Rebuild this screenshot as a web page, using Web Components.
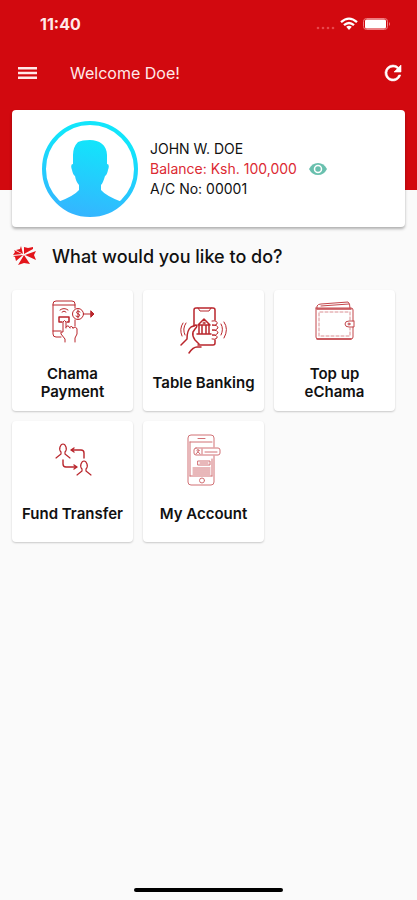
<!DOCTYPE html>
<html lang="en">
  <head>
    <meta charset="UTF-8" />
    <meta name="viewport" content="width=device-width, initial-scale=1.0" />
    <title>eChama</title>
    <style>
      body {
        margin: 0;
        background: #fafafa;
        color: #111;
        font-family: Inter, "Liberation Sans", sans-serif;
      }
    </style>
  </head>
  <body>
    <home-screen>
      <status-bar slot="top">11:40</status-bar>
      <app-bar slot="top">Welcome Doe!</app-bar>
      <profile-card>
        <span slot="name">JOHN W. DOE</span>
        <span slot="balance">Balance: Ksh. 100,000</span>
        <span slot="account">A/C No: 00001</span>
      </profile-card>
      <section-title>What would you like to do?</section-title>
      <action-grid>
        <action-tile icon="payment">Chama Payment</action-tile>
        <action-tile icon="banking">Table Banking</action-tile>
        <action-tile icon="wallet">Top up eChama</action-tile>
        <action-tile icon="transfer">Fund Transfer</action-tile>
        <action-tile icon="account">My Account</action-tile>
      </action-grid>
    </home-screen>

    <script>
      // Shared base: puts the class markup in an open shadow root
      class BaseElement extends HTMLElement {
        constructor() {
          super();
          this.attachShadow({ mode: "open" });
        }

        connectedCallback() {
          this.shadowRoot.innerHTML = `<style>${this.styles()}</style>${this.markup()}`;
        }
      }

      class HomeScreen extends BaseElement {
        styles() {
          return `
            :host { display: flex; flex-direction: column; min-height: 100vh; }
            header { background: #d2090f; color: #ffe9e9; padding-bottom: 92px; }
            main { flex: 1; margin-top: -80px; padding: 0 12px; }
            footer { display: flex; justify-content: center; padding: 8px; }
            .bar { width: 37%; height: 4px; border-radius: 2px; background: #000; }
          `;
        }

        markup() {
          return `
            <header><slot name="top"></slot></header>
            <main><slot></slot></main>
            <footer><div class="bar"></div></footer>
          `;
        }
      }

      class StatusBar extends BaseElement {
        styles() {
          return `
            :host {
              display: flex;
              align-items: center;
              justify-content: space-between;
              height: 48px;
              padding: 0 26px 0 40px;
              font-size: 16px;
              font-weight: 700;
            }
            svg { display: block; }
          `;
        }

        markup() {
          return `
            <slot></slot>
            <svg width="76" height="16" viewBox="0 0 76 16" fill="#fff">
              <g fill="#e8474c">
                <circle cx="3" cy="12" r="1.3" /><circle cx="8" cy="12" r="1.3" />
                <circle cx="13" cy="12" r="1.3" /><circle cx="18" cy="12" r="1.3" />
              </g>
              <g fill="none" stroke="#fff" stroke-width="2.3">
                <path d="M26 6.2Q34 -1 42 6.2" />
                <path d="M29 9.2Q34 4.8 39 9.2" />
              </g>
              <path d="M31.2 10.8Q34 8.6 36.8 10.8L34 14Z" />
              <rect x="48.500" y="2.500" width="24" height="11" rx="3" fill="none" stroke="#ef7d80" />
              <rect x="50" y="3.500" width="21" height="9" rx="1.500" />
              <path d="M74 6Q76 8 74 10Z" fill="#ef7d80" />
            </svg>
          `;
        }
      }

      class AppBar extends BaseElement {
        styles() {
          return `
            :host {
              display: flex;
              align-items: center;
              height: 50px;
              padding: 0 12px 0 16px;
              font-size: 16px;
            }
            h1 { flex: 1; margin: 0 0 0 30px; font-size: inherit; font-weight: 400; }
            button { border: 0; padding: 0; background: none; color: #fff; }
            svg { display: block; }
          `;
        }

        markup() {
          return `
            <button aria-label="Menu">
              <svg width="24" height="24" viewBox="0 0 24 24" fill="#ffe9e9">
                <path d="M2 18h19v-2.500H2V18zm0-4.700h19v-2.600H2v2.600zM2 6v2.500h19V6H2z" />
              </svg>
            </button>
            <h1><slot></slot></h1>
            <button aria-label="Refresh">
              <svg width="24" height="24" viewBox="0 0 24 24" fill="#fff" stroke="#fff" stroke-width=".6">
                <path d="M17.650 6.350A7.960 7.960 0 0 0 12 4a8 8 0 1 0 7.730 10h-2.080A6 6 0 1 1 12 6c1.660 0 3.140.690 4.220 1.780L13 11h7V4l-2.350 2.350z" />
              </svg>
            </button>
          `;
        }
      }

      class ProfileCard extends BaseElement {
        styles() {
          return `
            :host {
              display: flex;
              align-items: center;
              gap: 12px;
              min-height: 117px;
              padding-left: 30px;
              border-radius: 4px;
              background: #fff;
              box-shadow: 0 2px 3px rgba(0, 0, 0, 0.3);
              font-size: 14px;
              line-height: 20px;
            }
            svg { display: block; flex: none; }
            .balance { display: flex; align-items: center; gap: 12px; color: #dc2a33; }
            button { border: 0; padding: 0; background: none; }
          `;
        }

        markup() {
          return `
            <svg width="96" height="96" viewBox="0 0 96 96">
              <defs>
                <linearGradient id="fill" gradientUnits="userSpaceOnUse" x1="56" y1="0" x2="36" y2="96">
                  <stop offset="0.200" stop-color="#12e5fb" />
                  <stop offset="1" stop-color="#35b4ff" />
                </linearGradient>
              </defs>
              <circle cx="48" cy="48" r="46" fill="none" stroke="url(#fill)" stroke-width="4" />
              <path
                fill="url(#fill)"
                d="M48 19C57 19 65 24 65 34L65 43Q68 43 66 49Q65 54 63 55Q61 62 59 64L59 69Q64 75 80 81A46 46 0 0 1 16 81Q32 75 37 69L37 64Q34 61 33 55Q31 54 30 49Q28 43 31 43L31 34Q31 26 36 21Q40 19 48 19Z"
              />
              <path d="M18 82H78Q66 95 48 95T18 82Z" fill="url(#fill)" />
            </svg>
            <div>
              <div><slot name="name"></slot></div>
              <div class="balance">
                <slot name="balance"></slot>
                <button aria-label="Hide balance">
                  <svg width="18" height="14" viewBox="0 0 18 14">
                    <path d="M0 7Q3 1 9 1T18 7Q15 13 9 13T0 7Z" fill="#69c0ae" />
                    <circle cx="9" cy="7" r="3.500" fill="#69c0ae" stroke="#fff" stroke-width="1.500" />
                  </svg>
                </button>
              </div>
              <div><slot name="account"></slot></div>
            </div>
          `;
        }
      }

      class SectionTitle extends BaseElement {
        styles() {
          return `
            :host { display: flex; align-items: center; gap: 15px; height: 58px; padding-bottom: 2px; }
            svg { display: block; }
            h2 { margin: 0; font-size: 18px; font-weight: 500; }
          `;
        }

        markup() {
          return `
            <svg width="25" height="20" viewBox="0 0 25 20" fill="#e3151b">
              <path d="M11 8L4 4L8 3L9 0Z" />
              <path d="M12 8L12 1L16 2L21 1L21 3Z" />
              <path d="M13 9L24 5L22 9L24 14Z" />
              <path d="M12 9L18 18L12 17L6 19Z" />
              <path d="M11 9L4 15L3 11L1 10Z" />
              <path d="M10 8L1 9L3 6L2 4Z" />
            </svg>
            <h2><slot></slot></h2>
          `;
        }
      }

      class ActionGrid extends BaseElement {
        styles() {
          return `
            :host {
              display: grid;
              grid-template-columns: repeat(3, minmax(0, 1fr));
              gap: 10px;
              padding: 3px 10px 10px 0;
            }
          `;
        }

        markup() {
          return `<slot></slot>`;
        }
      }

      class ActionTile extends BaseElement {
        static icons = {
          payment: `
            <path d="M62 18V14Q62 11 59 11H43Q40 11 40 14V44Q40 47 43 47H48M62 30V36" />
            <path d="M40 15H62M40 41H48" />
            <path d="M47 20Q51 17 55 20M49 22Q51 20 53 22" />
            <path d="M49 32H46V27H56V32H54" stroke-width="1.500" />
            <circle cx="65" cy="24" r="5.500" />
            <path d="M67 22Q64 20 63.500 22.500Q64 24 66 24Q68 26 65 27L63 26M65 20V28" />
            <path d="M71 24H79" />
            <path d="M78 21L81 24L78 27Z" fill="#b9262c" />
            <path d="M52 52V49L48 44Q47 41 50 42V32Q51.500 29 53 32V38M53 37Q55 34 57 38M57 37Q59 35 60 38M60 38Q63 36 64 39V44L62 48V52" />
          `,
          banking: `
            <path d="M50 36V20Q50 18 52 18H69Q71 18 71 20V30M71 50V53Q71 55 69 55H54" stroke-width="1.500" />
            <path d="M54 18L56 21H65L67 18" />
            <path d="M54 35L60 29L66 35ZM55 36V43M58 36V43M62 36V43M65 36V43M53 44H67" stroke-width="1.500" />
            <circle cx="60" cy="33" r="1" />
            <path d="M37 55L43 49Q43 40 47 37L52 35Q54 36 51 39L49 42Q48 46 51 50L55 54M45 63Q49 57 53 57H57" stroke-width="1.500" />
            <path d="M68 31Q74 30 73 34Q71 36 68 35Q74 35 74 38Q72 41 68 40Q74 40 74 43Q72 46 68 45Q74 45 73 48Q71 50 68 49" />
            <path d="M42 33Q38 39 41 45M39 33Q35 39 38 46M77 34Q80 39 77 45M80 32Q85 39 80 48" />
          `,
          wallet: `
            <g opacity="0.850">
              <path d="M42 18V16Q43 14 46 14L73 12Q75 13 75 18" />
              <path d="M46 16L74 14" />
              <path d="M41 18H76Q78 18 78 20V31M78 37V47Q78 49 76 49H43Q41 49 41 47V18" />
              <path d="M42 19H76M42 49H76" stroke-width="1.500" />
              <path d="M75 30V22H44V46H75V38" stroke-dasharray="3 2" opacity="0.600" />
              <path d="M78 31H74Q70 31 70 34Q70 37 74 37H79V31Z" />
              <circle cx="74" cy="34" r="1" />
            </g>
          `,
          transfer: `
            <path d="M43 37L48 33V31Q46 29 47 26Q48 23 50 23T53 26Q54 29 52 31V33L57 37" stroke-width="1.200" />
            <path d="M64 54L69 50V48Q67 46 68 43Q69 40 71 40T74 43Q75 46 73 48V50L78 54" stroke-width="1.200" />
            <path d="M71 37V32Q71 29 68 29H58M61 27L58 29L61 31" stroke-width="1.400" />
            <path d="M50 39V43Q50 46 53 46H64M61 44L64 46L61 48" stroke-width="1.400" />
          `,
          account: `
            <g opacity="0.650">
              <path d="M70 26V17Q70 14 67 14H47Q44 14 44 17V61Q44 64 47 64H67Q70 64 70 61V35" />
              <path d="M46 21H68M54 17.500H61M46 55H68M46 21V55M68 38V55" />
              <rect x="50" y="27" width="26" height="7" rx="2" />
              <path d="M52 33Q54 29 56 33M58 28V33M61 31H73" />
              <circle cx="54" cy="29.500" r="1" />
              <rect x="54" y="40" width="12" height="4" />
              <path d="M56 42H64M49 47H66M49 49H66M49 51H66M49 53H66" />
              <circle cx="58" cy="59.500" r="2.500" />
            </g>
          `,
        };

        styles() {
          return `
            :host { display: block; }
            button {
              display: flex;
              flex-direction: column;
              align-items: center;
              width: 100%;
              min-height: 121px;
              padding: 0 0 8px;
              border: 0;
              border-radius: 4px;
              background: #fff;
              box-shadow: 0 1px 2px rgba(0, 0, 0, 0.2);
              color: inherit;
              font: 600 15px/18px Inter, "Liberation Sans", sans-serif;
            }
            svg { display: block; flex: none; }
            .label { display: flex; flex: 1; align-items: center; padding: 0 8px; }
          `;
        }

        markup() {
          return `
            <button>
              <svg width="120" height="72" viewBox="0 0 120 72" fill="none" stroke="#b9262c"
                stroke-linecap="round" stroke-linejoin="round">
                ${ActionTile.icons[this.getAttribute("icon")]}
              </svg>
              <span class="label"><slot></slot></span>
            </button>
          `;
        }
      }

      customElements.define("home-screen", HomeScreen);
      customElements.define("status-bar", StatusBar);
      customElements.define("app-bar", AppBar);
      customElements.define("profile-card", ProfileCard);
      customElements.define("section-title", SectionTitle);
      customElements.define("action-grid", ActionGrid);
      customElements.define("action-tile", ActionTile);
    </script>
  </body>
</html>
